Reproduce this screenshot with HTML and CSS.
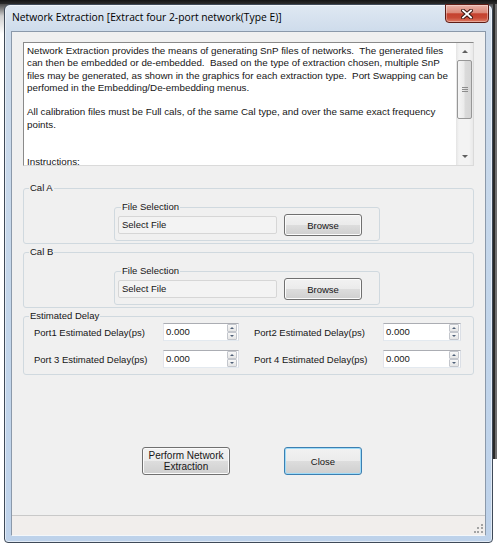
FILE: index.html
```html
<!DOCTYPE html>
<html lang="en">
<head>
  <meta charset="UTF-8">
  <title>Network Extraction</title>
  <link rel="stylesheet" href="styles.css">
</head>
<body>
  <div class="topbar"></div>
  <div class="desktop">
    <div class="edge-left"></div>

    <div class="window">
      <div class="titlebar">
        <span class="title">Network Extraction [Extract four 2-port network(Type E)]</span>
        <button class="close-x" title="Close">
          <svg width="12" height="10" viewBox="0 0 12 10">
            <path d="M2 1.5 L10 8.5 M10 1.5 L2 8.5" stroke="#3a1712" stroke-width="3.8" stroke-linecap="square" fill="none"/>
            <path d="M2 1.5 L10 8.5 M10 1.5 L2 8.5" stroke="#fff" stroke-width="1.8" stroke-linecap="square" fill="none"/>
          </svg>
        </button>
      </div>

      <div class="client">
        <div class="main">
          <!-- description text box with its scrollbar -->
          <div class="description">
            <div class="desc-text">Network Extraction provides the means of generating SnP files of networks.  The generated files
can then be embedded or de-embedded.  Based on the type of extraction chosen, multiple SnP
files may be generated, as shown in the graphics for each extraction type.  Port Swapping can be
perfomed in the Embedding/De-embedding menus.

All calibration files must be Full cals, of the same Cal type, and over the same exact frequency
points.


Instructions:</div>
            <div class="vscroll">
              <div class="sb-btn sb-up"></div>
              <div class="sb-thumb"></div>
              <div class="sb-track"></div>
              <div class="sb-btn sb-down"></div>
            </div>
          </div>

          <fieldset class="group cal">
            <legend>Cal A</legend>
            <fieldset class="group file-group">
              <legend>File Selection</legend>
              <div class="file-row">
                <div class="file-box">Select File</div>
                <button class="btn btn-browse">Browse</button>
              </div>
            </fieldset>
          </fieldset>

          <fieldset class="group cal">
            <legend>Cal B</legend>
            <fieldset class="group file-group">
              <legend>File Selection</legend>
              <div class="file-row">
                <div class="file-box">Select File</div>
                <button class="btn btn-browse">Browse</button>
              </div>
            </fieldset>
          </fieldset>

          <fieldset class="group delay">
            <legend>Estimated Delay</legend>
            <div class="delay-grid">
              <div class="delay-field">
                <label>Port1 Estimated Delay(ps)</label>
                <div class="spin"><span>0.000</span><div class="spin-btns"><i class="up"></i><i class="down"></i></div></div>
              </div>
              <div class="delay-field">
                <label>Port2 Estimated Delay(ps)</label>
                <div class="spin"><span>0.000</span><div class="spin-btns"><i class="up"></i><i class="down"></i></div></div>
              </div>
              <div class="delay-field">
                <label>Port 3 Estimated Delay(ps)</label>
                <div class="spin"><span>0.000</span><div class="spin-btns"><i class="up"></i><i class="down"></i></div></div>
              </div>
              <div class="delay-field">
                <label>Port 4 Estimated Delay(ps)</label>
                <div class="spin"><span>0.000</span><div class="spin-btns"><i class="up"></i><i class="down"></i></div></div>
              </div>
            </div>
          </fieldset>

          <div class="actions">
            <button class="btn btn-perform">Perform Network<br>Extraction</button>
            <button class="btn btn-close">Close</button>
          </div>
        </div>

        <div class="statusbar"><span class="grip"></span></div>
      </div>
    </div>

    <div class="edge-right"></div>
  </div>
</body>
</html>
```

FILE: styles.css
```css
* {
  box-sizing: border-box;
}
body {
  margin: 0;
  width: 497px;
  height: 552px;
  overflow: hidden;
  background: #fff;
  font-family: "Liberation Sans", Arial, sans-serif;
  font-size: 9.5px;
  color: #161616;
}
.topbar {
  height: 4px;
  background: linear-gradient(#151515, #2c2c2c);
}
.desktop {
  display: flex;
  height: 539px;
  background: linear-gradient(#4a4a4a, #cfcfcf 12px, #fff 30px);
}
.edge-left {
  width: 4px;
}
.edge-right {
  width: 4px;
  height: 455px;
  background: linear-gradient(to right, #2a2a2a 0, #2a2a2a 2px, #6f6f6f 2px);
}

/* window frame */
.window {
  width: 489px;
  height: 539px;
  display: flex;
  flex-direction: column;
  padding: 0 6px 6px;
  border: 1px solid #3f4a58;
  border-radius: 6px 6px 4px 4px;
  background: linear-gradient(#dfe8f2, #cddbeb 28px, #c2d5ea 60%, #bed2ea);
  box-shadow: inset 0 0 0 1px rgba(255, 255, 255, 0.55);
}
.titlebar {
  display: flex;
  align-items: flex-start;
  height: 26px;
  margin: 0 -6px;
  padding-left: 7px;
}
.title {
  flex: 1;
  padding-top: 5px;
  font-family: "Open Sans", "Liberation Sans", sans-serif;
  font-size: 10.3px;
  line-height: 14px;
  white-space: nowrap;
  color: #000;
}
.close-x {
  display: flex;
  align-items: center;
  justify-content: center;
  width: 44px;
  height: 19px;
  margin: -1px 3px 0 0;
  padding: 0;
  border: 1px solid #5e1d16;
  border-radius: 0 0 4px 4px;
  background: linear-gradient(#e9b2a8, #dc8a7a 45%, #c5412e 52%, #c84a36 75%, #df7d66);
  box-shadow: inset 0 0 0 1px rgba(255, 255, 255, 0.35);
}

/* client area */
.client {
  flex: 1;
  display: flex;
  flex-direction: column;
  border: 1px solid #8b99aa;
  border-bottom-color: #f4f7fa;
  background: #f0f0f0;
}
.main {
  flex: 1;
  padding: 10px 11px 0;
}

.description {
  display: flex;
  height: 124px;
  border: 1px solid;
  border-color: #8a8a8a #dadada #dadada #8a8a8a;
  background: #fff;
}
.desc-text {
  flex: 1;
  overflow: hidden;
  padding: 2px 0 0 3px;
  white-space: pre;
  font-size: 9.8px;
  line-height: 12.3px;
}
.vscroll {
  width: 17px;
  display: flex;
  flex-direction: column;
  background: linear-gradient(to right, #e4e4e4, #f3f3f3 3px, #f3f3f3 13px, #e9e9e9);
}
.sb-btn {
  height: 17px;
  display: flex;
  align-items: center;
  justify-content: center;
}
.sb-up::before,
.sb-down::before {
  content: "";
  border-left: 3px solid transparent;
  border-right: 3px solid transparent;
}
.sb-up::before {
  border-bottom: 3px solid #5f5f5f;
}
.sb-down::before {
  border-top: 3px solid #5f5f5f;
}
.sb-thumb {
  height: 59px;
  margin: 0 1px;
  display: flex;
  align-items: center;
  justify-content: center;
  border: 1px solid #979797;
  border-radius: 2px;
  background: linear-gradient(to right, #f5f5f5, #ebebeb 45%, #dadada 55%, #d5d5d5);
}
.sb-thumb::before {
  content: "";
  width: 6px;
  height: 5px;
  background: repeating-linear-gradient(#8c8c8c 0, #8c8c8c 1px, transparent 1px, transparent 2px);
}
.sb-track {
  flex: 1;
}

/* group boxes */
.group {
  margin: 0;
  padding: 0;
  min-width: 0;
  border: 1px solid #d0d9df;
  border-radius: 3px;
}
.group legend {
  margin-left: 5px;
  padding: 0 1px;
  line-height: 12px;
}
.cal {
  margin-top: 2px;
}
.description + .cal {
  margin-top: 16px;
}
.file-group {
  width: 266px;
  margin: 7px 0 2px 90px;
}
.file-group legend {
  margin-left: 6px;
}
.file-row {
  display: flex;
  align-items: center;
  gap: 7px;
  margin: 1px 17px 4px 3px;
}
.file-box {
  width: 159px;
  height: 18px;
  padding-left: 3px;
  line-height: 16px;
  border: 1px solid #d6d6d6;
  border-radius: 2px;
  background: #f3f3f3;
}

.btn {
  font: inherit;
  color: #161616;
  padding: 0;
  border: 1px solid #707070;
  border-radius: 3px;
  background: linear-gradient(#f2f2f2, #ebebeb 50%, #dddddd 50%, #cfcfcf);
  box-shadow: inset 0 0 0 1px #fbfbfb;
}
.btn-browse {
  width: 78px;
  height: 22px;
}

.delay {
  margin-top: 2px;
}
.delay-grid {
  display: grid;
  grid-template-columns: 205px 207px;
  column-gap: 15px;
  row-gap: 9px;
  margin: 1px 0 6px 10px;
}
.delay-field {
  display: flex;
  align-items: center;
}
.delay-field label {
  width: 129px;
}
.spin {
  flex: 1;
  height: 18px;
  display: flex;
  border: 1px solid;
  border-color: #abadb3 #dbdfe6 #e3e9ef #e2e3ea;
  background: #fff;
}
.spin span {
  flex: 1;
  padding-left: 2px;
  line-height: 16px;
}
.spin-btns {
  width: 11px;
  display: flex;
  flex-direction: column;
  padding: 0 1px 0 0;
}
.spin-btns i {
  flex: 1;
  display: flex;
  align-items: center;
  justify-content: center;
  border: 1px solid #c3c6cc;
  border-radius: 1px;
  background: linear-gradient(#f8f8f8, #e5e5e5);
}
.spin-btns i::before {
  content: "";
  border-left: 2px solid transparent;
  border-right: 2px solid transparent;
}
.spin-btns .up::before {
  border-bottom: 2px solid #4f6078;
}
.spin-btns .down::before {
  border-top: 2px solid #4f6078;
}

/* bottom buttons */
.actions {
  display: flex;
  justify-content: center;
  gap: 54px;
  margin-top: 72px;
  padding-left: 7px;
}
.btn-perform {
  width: 88px;
  height: 28px;
  font-size: 10px;
  line-height: 11px;
}
.btn-close {
  width: 78px;
  height: 28px;
  border-color: #3c7fb1;
  box-shadow: inset 0 0 0 1px #9edbf8;
}

.statusbar {
  height: 20px;
  display: flex;
  justify-content: flex-end;
  align-items: flex-end;
  padding: 0 2px 2px 0;
  border-top: 1px solid #c9c9c9;
  background: #f1eeec;
}
.grip {
  width: 2px;
  height: 2px;
  background: #a3a3a3;
  box-shadow: -4px 0 #a3a3a3, -7px 0 #a3a3a3, 0 -4px #a3a3a3, -4px -4px #a3a3a3, 0 -7px #a3a3a3;
}
```
